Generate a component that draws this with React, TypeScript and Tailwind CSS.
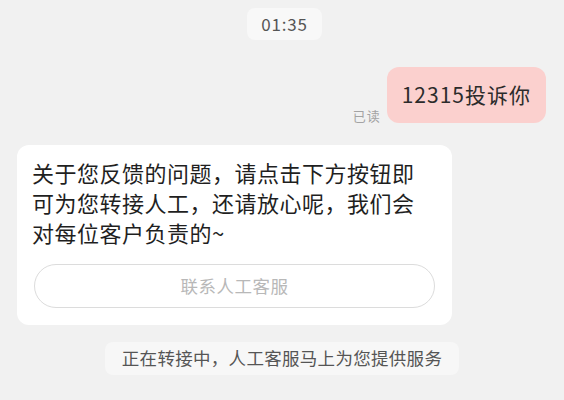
import React from 'react';

const font = { fontFamily: '"Noto Sans CJK SC", "Noto Sans", sans-serif' };

const App: React.FC = () => {
  return (
    <div className="w-[564px] h-[400px] bg-[#f1f1f1] overflow-hidden flex flex-col" style={font}>
      {/* Timestamp */}
      <div className="flex justify-center pt-[8px] pl-[5px]">
        <div className="h-[32px] w-[75px] rounded-[8px] bg-[#f8f8f8] flex items-center justify-center text-[17px] text-[#555] tracking-[0.8px]">
          01:35
        </div>
      </div>

      {/* Outgoing message */}
      <div className="flex justify-end items-end gap-[6px] mt-[27px] pr-[18px]">
        <span className="text-[13px] text-[#a3a3a3] mb-[1px] leading-none tracking-[1px]">已读</span>
        <div className="h-[56px] px-[15px] rounded-[12px] bg-[#fbd0ce] flex items-center text-[21px] text-[#2b2b2b] tracking-[1px]">
          12315投诉你
        </div>
      </div>

      {/* Incoming message */}
      <div className="mt-[22px] ml-[17px] w-[435px] rounded-[12px] bg-white pt-[12px] pb-[17px]">
        <div className="pl-[15px] text-[22px] leading-[30px] text-[#1f1f1f] tracking-[0.5px]">
          <div>关于您反馈的问题，请点击下方按钮即</div>
          <div>可为您转接人工，还请放心呢，我们会</div>
          <div>对每位客户负责的~</div>
        </div>
        <div className="mt-[17px] mx-[17px] h-[44px] rounded-full border-[1.5px] border-[#dcdcdc] flex items-center justify-center text-[17.5px] text-[#b8b8b8] tracking-[0.5px]">
          联系人工客服
        </div>
      </div>

      {/* System notice */}
      <div className="flex justify-center mt-[17px]">
        <div className="h-[33px] px-[17px] rounded-[8px] bg-[#f7f7f7] flex items-center text-[17.5px] text-[#555] tracking-[0.3px]">
          正在转接中，人工客服马上为您提供服务
        </div>
      </div>
    </div>
  );
};

export default App;
